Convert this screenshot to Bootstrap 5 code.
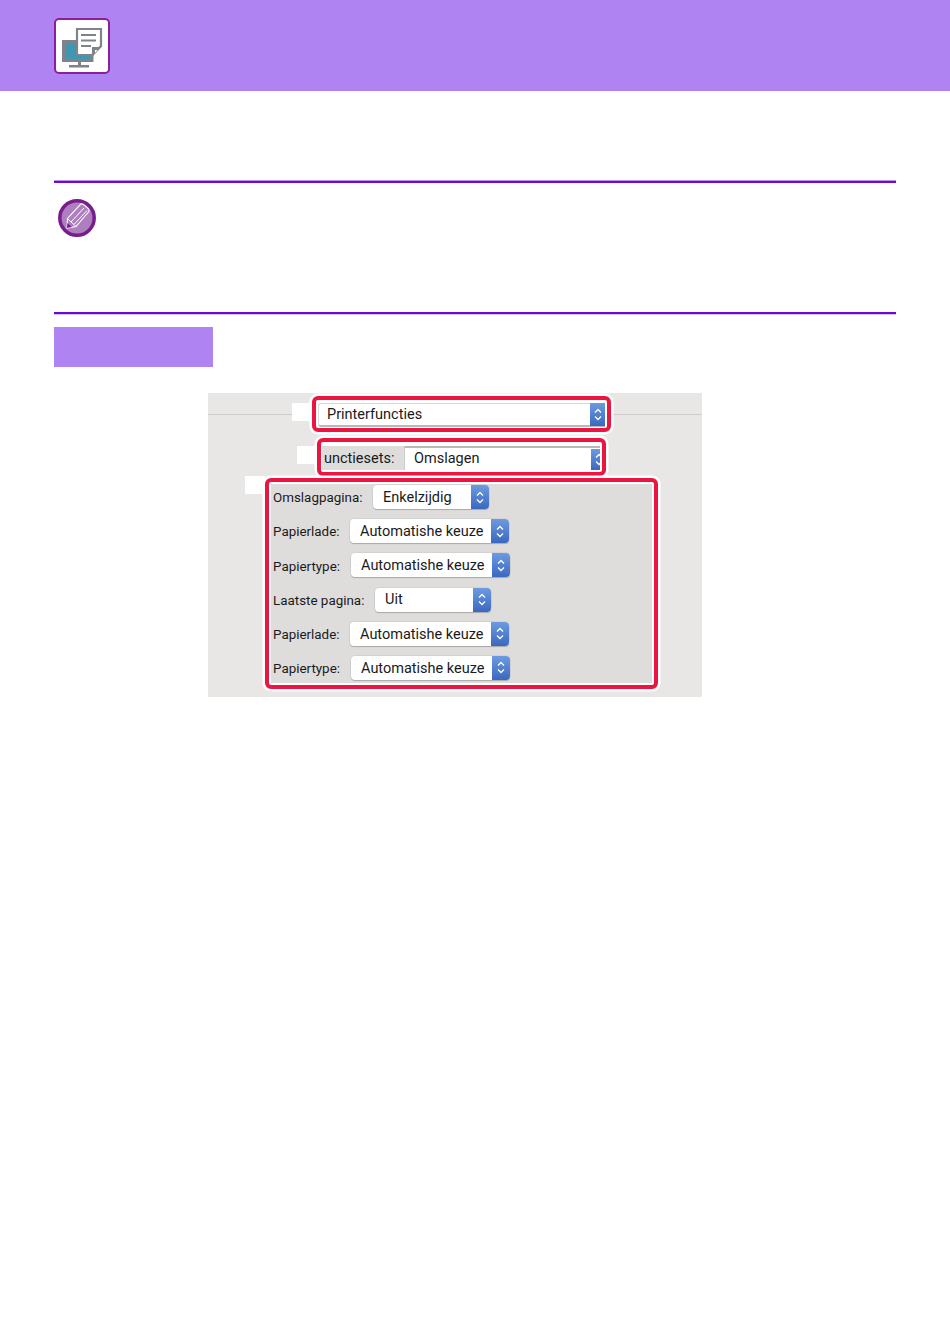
<!DOCTYPE html>
<html lang="nl">
<head>
<meta charset="utf-8">
<title>Omslagen</title>
<link rel="stylesheet" href="https://cdn.jsdelivr.net/npm/bootstrap@5.3.0/dist/css/bootstrap.min.css">
<style>
body{background:#fff;font-family:Roboto,"Liberation Sans",sans-serif;}
.hdr-band{height:91px;background:#b083f2;padding:18px 0 0 54px;}
.hdr-icon{width:56px;height:56px;display:block;}
.note-box{margin:90px 54px 0;height:133px;border-top:2px solid #6a08dc;border-bottom:2px solid #6a08dc;box-shadow:0 -1px 0 #b892ee,0 1px 0 #d6c2f6;padding:16px 0 0 4px;}
.note-ic{width:38px;height:38px;display:block;}
.step-tag{width:159px;height:40px;background:#b083f2;margin:13px 0 0 54px;}
.shot{position:relative;width:494px;height:304px;margin:26px 0 0 208px;background:#e8e7e6;overflow:hidden;padding-top:1px;font-size:14.5px;color:#1a1a1a;line-height:1;}
.hair{position:absolute;left:0;right:0;top:21px;height:1px;background:#cfcdcc;}
.rw{position:relative;}
.patch{width:20px;height:18px;background:#fff;flex:none;}
.frm{background:#fff;border-radius:6px;box-shadow:0 0 0 2.5px #fff;border:4px solid #ea1540;flex:none;}
.frm1{width:299px;height:36px;margin-top:2px;padding:3px 2px 0 2px;}
.frm2{width:289px;height:38px;margin-top:6px;padding:4px 2px 2px 1px;}
.frm3{width:393px;height:211px;margin-top:2px;padding:2px;}
.rw1{margin-left:84px;}
.rw2{margin-left:89px;}
.rw3{margin-left:37px;}
.rw1 .patch{margin-top:-2px;}
.rw2 .patch{margin-top:2px;}
.rw3 .patch{align-self:flex-start;}
.tx{padding-top:2px;flex:none;}
.wide-sel{height:24px;width:100%;background:#fff;border-top:1px solid #d8d8d8;border-left:1px solid #d8d8d8;border-bottom:2px solid #b9b9b9;border-radius:3px 0 0 3px;padding-left:8px;}
.strip{height:100%;background:#dfdddc;}
.strip-lab{width:82px;padding-left:2px;flex:none;}
.strip-sel{flex:1;height:24px;background:#fff;border-top:2px solid #b9b9b9;border-left:1px solid #ccc;padding-left:9px;}
.arr{background:linear-gradient(#6d9be0,#3a68c0);flex:none;display:flex;align-items:center;justify-content:center;margin-left:auto;}
.arr svg{width:10px;height:15px;display:block;flex:none;}
.arr16{width:15px;height:23px;margin-top:-1px;}
.arr9{width:9px;height:21px;justify-content:flex-start;padding-left:3px;overflow:hidden;}
.arr18{width:18px;height:24px;border-radius:0 4px 4px 0;}
.pnl{background:#dfdddc;height:100%;padding:1px 0 0 2px;row-gap:10.2px;}
.opt-row{height:24px;flex:none;}
.opt-lab{flex:none;font-size:13.4px;padding-top:2px;}
.lab-o{width:100px;}.lab-l{width:77px;}.lab-t{width:78px;}.lab-e{width:102px;}
.pop{height:24px;background:#fff;border-radius:4px;box-shadow:0 1px 1px #a9a9a9,0 0 0 .5px #c8c8c8;padding-left:10px;}
.pop-s{width:116px;}.pop-w{width:159px;}
</style>
</head>
<body>
<div class="hdr-band">
<svg class="hdr-icon" viewBox="0 0 56 56"><rect x="1" y="1" width="54" height="54" rx="4" fill="#fff" stroke="#8c1f9c" stroke-width="2"/><rect x="9.500" y="23.500" width="28.500" height="19" fill="#3f97b2" stroke="#80848a" stroke-width="3"/><rect x="24" y="44" width="3" height="4" fill="#80848a"/><rect x="15" y="47" width="20" height="2.500" fill="#80848a"/><path d="M23 11h24v17l-9 9H23z" fill="#fff" stroke="#80848a" stroke-width="2.200"/><path d="M27 17h15M27 22.500h15M27 28h10" stroke="#80848a" stroke-width="1.800"/><path d="M38 29h9.500l-9 9.500H38z" fill="#80848a"/><path d="M41 32h2.500l-2.500 3z" fill="#fff"/></svg>
</div>
<div class="note-box">
<svg class="note-ic" viewBox="0 0 38 38"><circle cx="19" cy="19" r="17.200" fill="#ae7fbf" stroke="#7a1d8c" stroke-width="3.500"/><path d="M9 29l.5-9.500L22 5.800c1-1.100 2.500-1.100 3.500-.3l4.800 4.200c1 .9 1.100 2.300.2 3.300L18 27.500z" fill="none" stroke="#fff" stroke-width="1.100"/><path d="M13 23l13-14M16 25.500l13-14" stroke="#fff" stroke-width="1"/><path d="M9.500 19.500l3.500 3.500 3 2.500 2 2" fill="none" stroke="#fff" stroke-width="1"/><path d="M9 29l.3-5 4.700 4z" fill="#7a1d8c"/></svg>
</div>
<div class="step-tag"></div>
<div class="shot">
<div class="hair"></div>
<div class="rw rw1 d-flex align-items-center">
<div class="patch"></div>
<div class="frm frm1 d-flex align-items-start">
<div class="wide-sel d-flex align-items-center"><span class="tx">Printerfuncties</span><div class="arr arr16"><svg viewBox="0 0 10 15"><path d="M2 5.500l3-3 3 3M2 9.500l3 3 3-3" fill="none" stroke="#fff" stroke-width="1.300"/></svg></div></div>
</div>
</div>
<div class="rw rw2 d-flex align-items-center">
<div class="patch"></div>
<div class="frm frm2 d-flex">
<div class="strip strip-lab d-flex align-items-center"><span class="tx">unctiesets:</span></div>
<div class="strip-sel d-flex align-items-center">Omslagen<div class="arr arr9"><svg viewBox="0 0 10 15"><path d="M2 5.500l3-3 3 3M2 9.500l3 3 3-3" fill="none" stroke="#fff" stroke-width="1.300"/></svg></div></div>
</div>
</div>
<div class="rw rw3 d-flex">
<div class="patch"></div>
<div class="frm frm3">
<div class="pnl d-flex flex-column">
<div class="opt-row d-flex align-items-center"><span class="opt-lab lab-o">Omslagpagina:</span><div class="pop pop-s d-flex align-items-center"><span class="tx">Enkelzijdig</span><div class="arr arr18"><svg viewBox="0 0 10 15"><path d="M2 5.500l3-3 3 3M2 9.500l3 3 3-3" fill="none" stroke="#fff" stroke-width="1.300"/></svg></div></div></div>
<div class="opt-row d-flex align-items-center"><span class="opt-lab lab-l">Papierlade:</span><div class="pop pop-w d-flex align-items-center"><span class="tx">Automatishe keuze</span><div class="arr arr18"><svg viewBox="0 0 10 15"><path d="M2 5.500l3-3 3 3M2 9.500l3 3 3-3" fill="none" stroke="#fff" stroke-width="1.300"/></svg></div></div></div>
<div class="opt-row d-flex align-items-center"><span class="opt-lab lab-t">Papiertype:</span><div class="pop pop-w d-flex align-items-center"><span class="tx">Automatishe keuze</span><div class="arr arr18"><svg viewBox="0 0 10 15"><path d="M2 5.500l3-3 3 3M2 9.500l3 3 3-3" fill="none" stroke="#fff" stroke-width="1.300"/></svg></div></div></div>
<div class="opt-row d-flex align-items-center"><span class="opt-lab lab-e">Laatste pagina:</span><div class="pop pop-s d-flex align-items-center"><span class="tx">Uit</span><div class="arr arr18"><svg viewBox="0 0 10 15"><path d="M2 5.500l3-3 3 3M2 9.500l3 3 3-3" fill="none" stroke="#fff" stroke-width="1.300"/></svg></div></div></div>
<div class="opt-row d-flex align-items-center"><span class="opt-lab lab-l">Papierlade:</span><div class="pop pop-w d-flex align-items-center"><span class="tx">Automatishe keuze</span><div class="arr arr18"><svg viewBox="0 0 10 15"><path d="M2 5.500l3-3 3 3M2 9.500l3 3 3-3" fill="none" stroke="#fff" stroke-width="1.300"/></svg></div></div></div>
<div class="opt-row d-flex align-items-center"><span class="opt-lab lab-t">Papiertype:</span><div class="pop pop-w d-flex align-items-center"><span class="tx">Automatishe keuze</span><div class="arr arr18"><svg viewBox="0 0 10 15"><path d="M2 5.500l3-3 3 3M2 9.500l3 3 3-3" fill="none" stroke="#fff" stroke-width="1.300"/></svg></div></div></div>
</div>
</div>
</div>
</div>
<script src="https://cdn.jsdelivr.net/npm/bootstrap@5.3.0/dist/js/bootstrap.bundle.min.js"></script>
</body>
</html>
